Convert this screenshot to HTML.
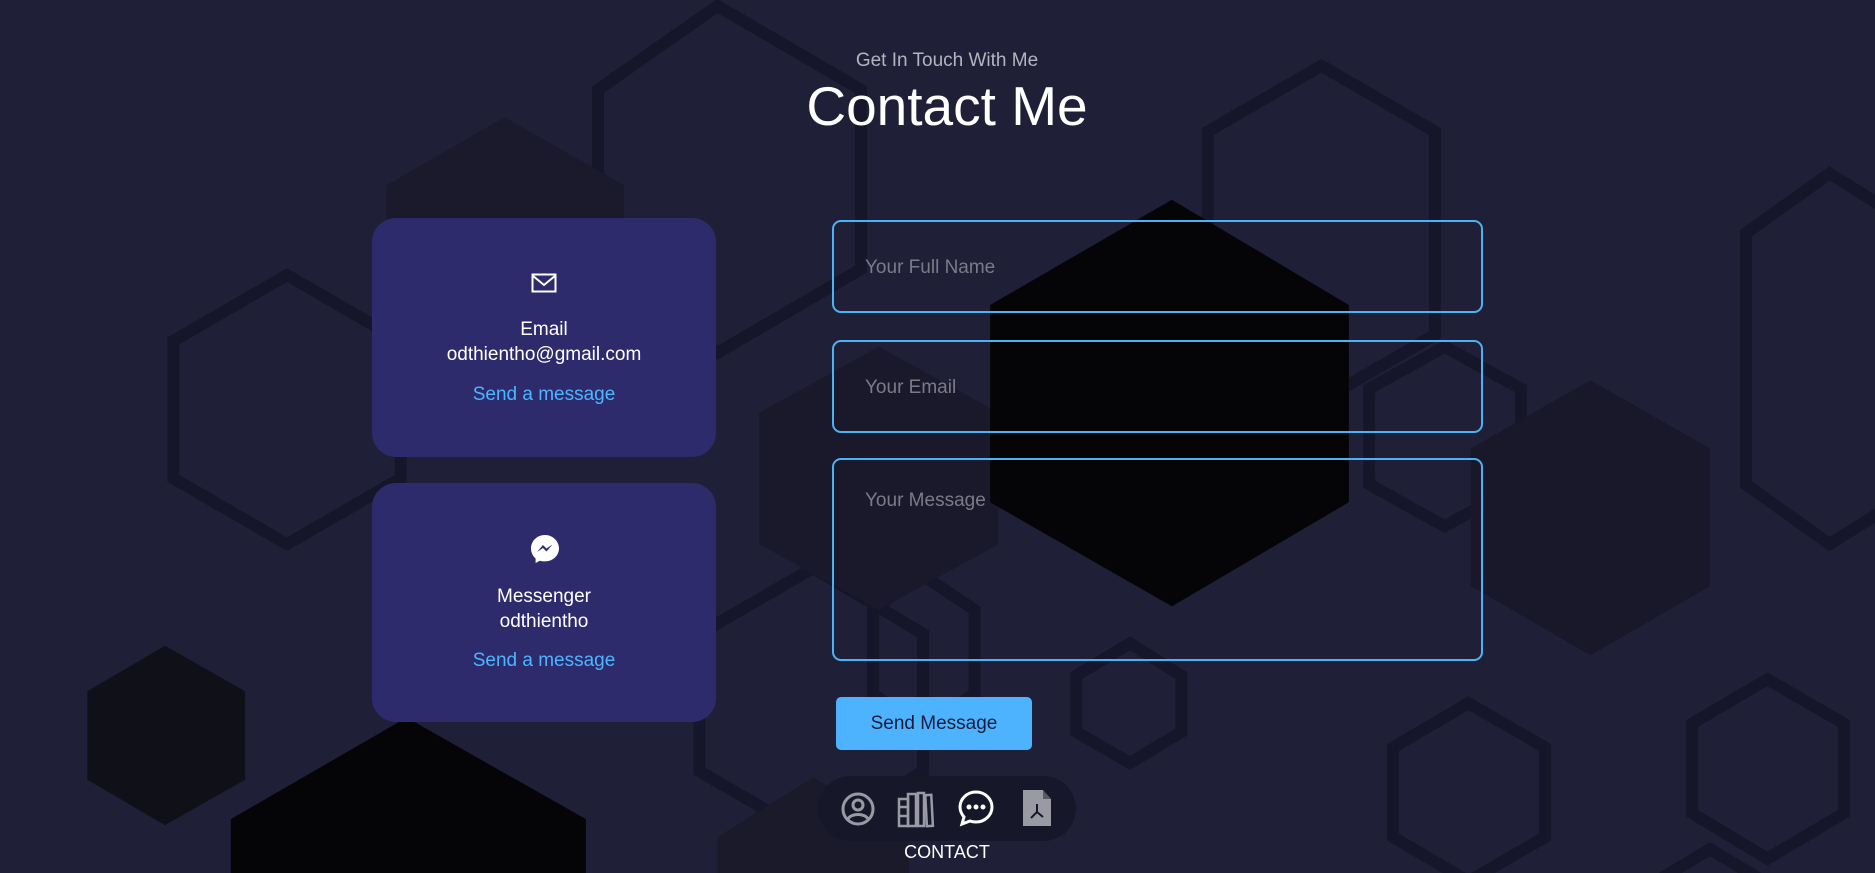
<!DOCTYPE html>
<html><head><meta charset="utf-8"><style>
html,body{margin:0;padding:0}
body{width:1875px;height:873px;overflow:hidden;background:#1f1f37;font-family:"Liberation Sans",sans-serif;position:relative}
svg.bg{position:absolute;left:0;top:0}
.abs{position:absolute}
.sub{left:0;width:1894px;top:50px;text-align:center;color:#b4b4c0;font-size:19px}
.title{left:0;width:1894px;top:74px;text-align:center;color:#fff;font-size:55px}
.card{position:absolute;left:372px;width:344px;height:239px;background:#2d2b6b;border-radius:24px;text-align:center;color:#fff;font-size:19px}
.card .l{position:absolute;left:0;right:0}
.blue{color:#4db5ff}
.inp{position:absolute;left:832px;width:647px;border:2px solid #4bb3f5;border-radius:9px;color:#7b7b88;font-size:19px}
.inp span{position:absolute;left:31px}
.btn{left:836px;top:697px;width:196px;height:53px;background:#4db3ff;border-radius:5px;color:#1b1b3a;font-size:19px;text-align:center;line-height:53px}
.nav{left:818px;top:776px;width:258px;height:65px;background:#17172a;border-radius:33px}
.lab{left:818px;width:258px;top:842px;text-align:center;color:#fff;font-size:18px}
</style></head><body>
<svg class="bg" width="1875" height="873" viewBox="0 0 1568 730" preserveAspectRatio="none">
<g fill="none" stroke="#16162a" stroke-width="10">
<polygon points="240,230 335,285 335,400 240,455 145,400 145,285"/>
<polygon points="600,5 720,75 720,225 600,295 500,225 500,75"/>
<polygon points="1105,55 1200,110 1200,280 1105,335 1010,280 1010,110"/>
<polygon points="1530,145 1610,195 1610,405 1530,455 1460,405 1460,195"/>
<polygon points="1208,290 1272,325 1272,405 1208,440 1145,405 1145,325"/>
<polygon points="680,475 772,530 772,645 680,700 585,645 585,530"/>
<polygon points="945,538 988,565 988,612 945,638 900,612 900,565"/>
<polygon points="1228,588 1292,625 1292,700 1228,737 1165,700 1165,625"/>
<polygon points="1478,568 1542,605 1542,680 1478,718 1415,680 1415,605"/>
<polygon points="770,480 815,510 815,580 770,610 730,580 730,510"/>
<polygon points="1430,710 1480,740 1380,740"/>
</g>
<polygon points="422,98 522,155 522,330 422,380 323,330 323,155" fill="#1a1a2c"/>
<polygon points="735,290 835,345 835,455 735,510 635,455 635,345" fill="#19192b"/>
<polygon points="1330,318 1430,375 1430,490 1330,548 1230,490 1230,375" fill="#18182a"/>
<polygon points="980,167 1128,255 1128,420 980,507 828,420 828,255" fill="#050508"/>
<polygon points="138,540 205,578 205,652 138,690 73,652 73,578" fill="#101019"/>
<polygon points="340,600 490,685 490,760 193,760 193,685" fill="#050508"/>
<polygon points="680,650 760,700 760,740 600,740 600,700" fill="#1a1a2a"/>
</svg>

<div class="abs sub">Get In Touch With Me</div>
<div class="abs title">Contact Me</div>

<div class="card" style="top:218px">
  <svg style="position:absolute;left:159px;top:55px" width="26" height="20" viewBox="0 0 26 20"><rect x="1.5" y="1.5" width="23" height="17" fill="none" stroke="#fff" stroke-width="2"/><path d="M1.5 2.5 L13 12 L24.5 2.5" fill="none" stroke="#fff" stroke-width="2"/></svg>
  <div class="l" style="top:101px">Email</div>
  <div class="l" style="top:126px">odthientho@gmail.com</div>
  <div class="l blue" style="top:166px">Send a message</div>
</div>
<div class="card" style="top:483px">
  <svg style="position:absolute;left:157px;top:50px" width="32" height="32" viewBox="0 0 32 32"><path d="M16 2C8 2 2 8 2 15.5c0 4 1.8 7.5 4.6 10V30l4.2-2.3c1.6.4 3.3.7 5.2.7 8 0 14-6 14-13S24 2 16 2z" fill="#fff"/><path d="M8 19 L14 12 L17.5 15.5 L23.5 11.5 L17.5 18.5 L14 15 Z" fill="#2d2b6b"/></svg>
  <div class="l" style="top:103px">Messenger</div>
  <div class="l" style="top:128px">odthientho</div>
  <div class="l blue" style="top:167px">Send a message</div>
</div>

<div class="inp" style="top:220px;height:89px"><span style="top:35px">Your Full Name</span></div>
<div class="inp" style="top:340px;height:89px"><span style="top:35px">Your Email</span></div>
<div class="inp" style="top:458px;height:199px"><span style="top:30px">Your Message</span></div>
<div class="abs btn">Send Message</div>

<div class="abs nav">
  <svg style="position:absolute;left:22px;top:15px" width="36" height="36" viewBox="0 0 36 36" fill="none" stroke="#9a9aa4" stroke-width="3"><circle cx="18" cy="18" r="15"/><circle cx="18" cy="14" r="5"/><path d="M8 28c3-6 17-6 20 0"/></svg>
  <svg style="position:absolute;left:78px;top:13px" width="40" height="40" viewBox="0 0 40 40" fill="none" stroke="#9a9aa4" stroke-width="2.5"><rect x="3" y="10" width="9" height="27"/><rect x="12" y="5" width="8" height="32"/><path d="M3 18h9M3 27h9"/><rect x="22" y="4" width="6" height="33"/><rect x="30" y="6" width="6" height="31" transform="rotate(-3 33 20)"/></svg>
  <svg style="position:absolute;left:139px;top:13px" width="38" height="38" viewBox="0 0 38 38" fill="none" stroke="#fff" stroke-width="3"><path d="M19 3C10 3 3 10 3 18c0 4 1.5 7 4 10l-2 7 8-3c2 .8 4 1 6 1 9 0 16-7 16-15S28 3 19 3z"/><circle cx="12" cy="18" r="1" fill="#fff"/><circle cx="19" cy="18" r="1" fill="#fff"/><circle cx="26" cy="18" r="1" fill="#fff"/></svg>
  <svg style="position:absolute;left:204px;top:13px" width="30" height="38" viewBox="0 0 30 38"><path d="M1 1h20l8 9v27H1z" fill="#9a9aa4"/><path d="M21 1v9h8" fill="#17172a" opacity=".5"/><path d="M15 15v8l-6 6M15 23l6 5" fill="none" stroke="#17172a" stroke-width="2"/></svg>
</div>
<div class="abs lab">CONTACT</div>
</body></html>
